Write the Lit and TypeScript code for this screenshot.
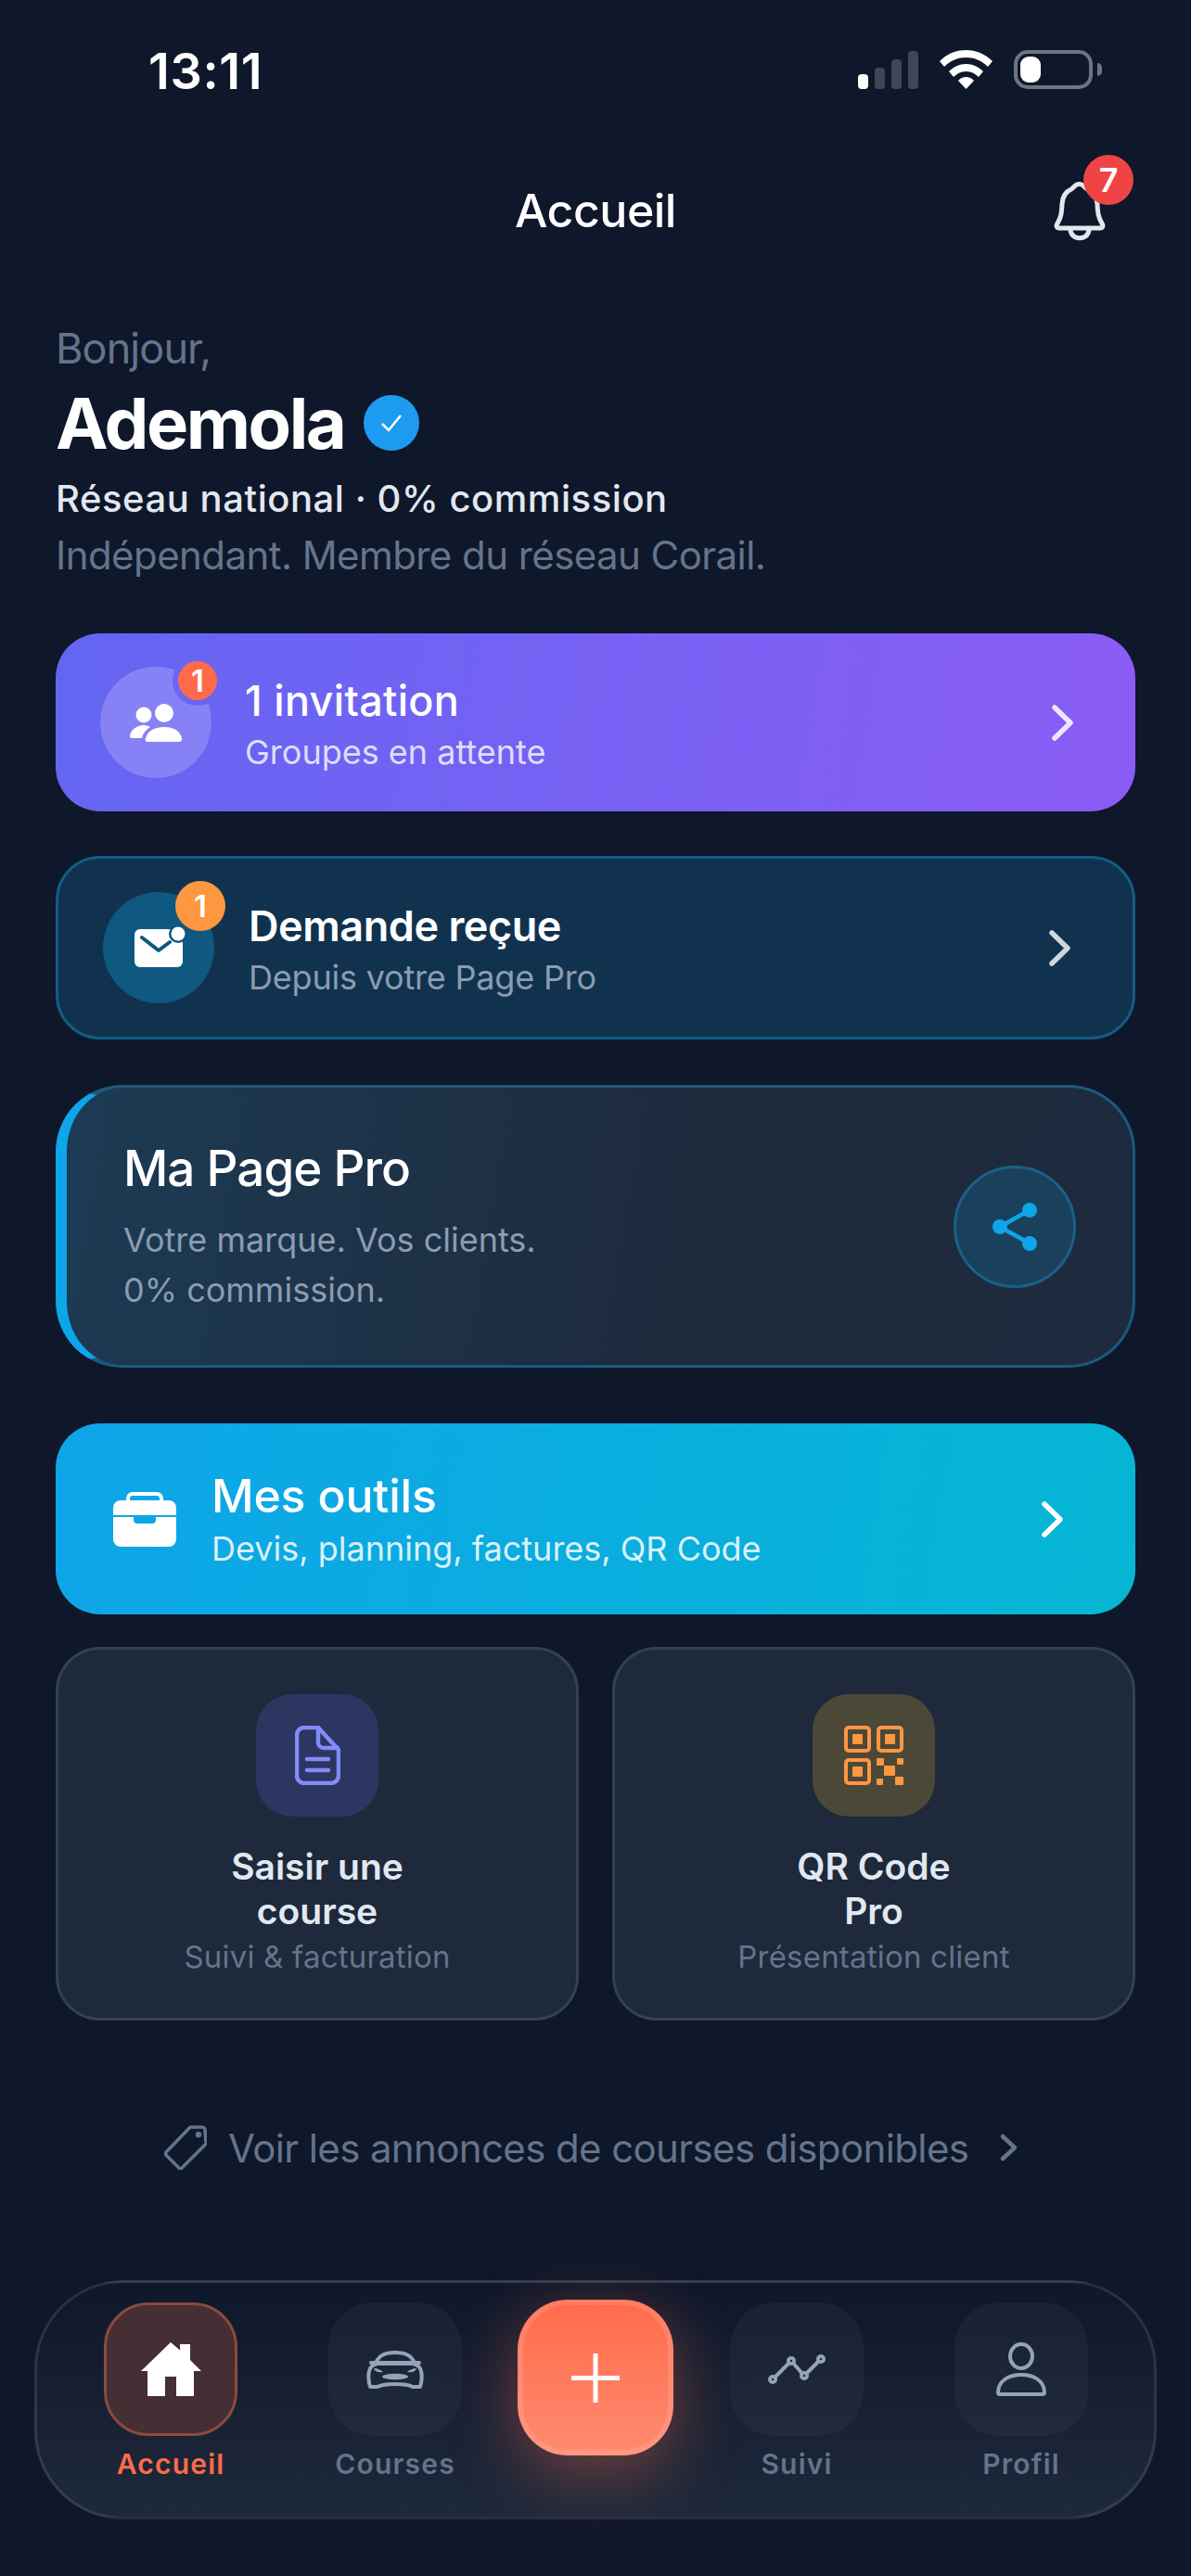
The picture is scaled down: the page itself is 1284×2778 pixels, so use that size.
import { LitElement, html, css, svg } from 'lit';
import { customElement } from 'lit/decorators.js';

const chevron = (stroke: string) => html`<svg class="chev" width="23" height="39" viewBox="0 0 23 39" fill="none">
  <path d="M3 3 L20 19.5 L3 36" stroke=${stroke} stroke-width="5.5" stroke-linecap="round" stroke-linejoin="round" />
</svg>`;

const navIcons = {
  home: svg`<path fill="#fff" d="M32 0 L42 8.5 V2 H53 V19 L65 31 H57 V58 H38 V37 H26 V58 H7 V31 H0 Z" />`,
  car: svg`<g fill="none" stroke="#94a3b8" stroke-width="4" stroke-linejoin="round">
    <path d="M10 13 C14 5 20 2 31 2 C42 2 48 5 52 13" />
    <path d="M5 13 H57" stroke-linecap="round" />
    <path d="M4 39 C2 32 2 26 3 22 C4 17 7 15 12 14 H50 C55 15 58 17 59 22 C60 26 60 32 58 39 H50 C44 36 38 36 31 36 C24 36 18 36 12 39 Z" />
  </g>
  <path fill="#94a3b8" d="M8 19 C12 19 16 21 18 23 C13 24 9 23 8 19Z M54 19 C50 19 46 21 44 23 C49 24 53 23 54 19Z" />
  <ellipse cx="31" cy="28" rx="14" ry="3.2" fill="#94a3b8" />`,
  chart: svg`<path d="M5 27 L25 7 L39 23 L57 5" fill="none" stroke="#94a3b8" stroke-width="4" stroke-linejoin="round" />
  <g fill="#94a3b8"><circle cx="5" cy="27" r="5" /><circle cx="25" cy="7" r="5" /><circle cx="39" cy="23" r="5" /><circle cx="57" cy="5" r="5" /></g>
  <g fill="#1a2436"><circle cx="5" cy="27" r="1.2" /><circle cx="25" cy="7" r="1.2" /><circle cx="39" cy="23" r="1.2" /><circle cx="57" cy="5" r="1.2" /></g>`,
  user: svg`<g fill="none" stroke="#94a3b8" stroke-width="4" stroke-linejoin="round">
    <ellipse cx="27" cy="15" rx="12" ry="13" />
    <path d="M2 54 C2 42 13 35 27 35 C41 35 52 42 52 54 C52 55.5 51 56 50 56 H4 C3 56 2 55.5 2 54Z" />
  </g>`,
};

const tabs = [
  { label: 'Accueil', icon: navIcons.home, w: 65, h: 58, active: true },
  { label: 'Courses', icon: navIcons.car, w: 62, h: 41, active: false },
  { label: 'Suivi', icon: navIcons.chart, w: 62, h: 33, active: false },
  { label: 'Profil', icon: navIcons.user, w: 54, h: 58, active: false },
];

@customElement('app-root')
export class AppRoot extends LitElement {
  static styles = css`
    :host {
      display: block;
      width: 1284px;
      height: 2778px;
      overflow: hidden;
      background: #0f172a;
      color: #fff;
      font-family: Inter, 'Liberation Sans', sans-serif;
    }

    /* status bar */
    .status {
      display: flex;
      align-items: center;
      justify-content: space-between;
      height: 42px;
      padding: 54px 97px 0 160px;
    }
    .time {
      font-size: 54px;
      font-weight: 600;
      line-height: 42px;
      letter-spacing: 0.6px;
      padding-top: 4px;
    }
    .status-icons {
      display: flex;
      align-items: flex-end;
    }
    .signal {
      display: flex;
      align-items: flex-end;
      gap: 7px;
      margin-right: 23px;
    }
    .signal i {
      display: block;
      width: 11px;
      border-radius: 4px;
      background: #3f4656;
    }
    .signal i.on {
      background: #fff;
    }
    .battery {
      position: relative;
      box-sizing: border-box;
      width: 85px;
      height: 42px;
      margin-left: 23px;
      margin-right: 9px;
      padding: 3px;
      border: 4px solid #6f7480;
      border-radius: 15px;
    }
    .battery b {
      display: block;
      width: 22px;
      height: 28px;
      border-radius: 9px;
      background: #fff;
    }
    .battery::after {
      content: '';
      position: absolute;
      right: -14px;
      top: 10px;
      width: 5px;
      height: 14px;
      border-radius: 0 6px 6px 0;
      background: #6f7480;
    }

    /* top bar */
    .topbar {
      display: grid;
      grid-template-columns: 1fr auto 1fr;
      align-items: center;
      height: 90px;
      margin-top: 86px;
    }
    .title {
      font-size: 50px;
      font-weight: 500;
      line-height: 90px;
      letter-spacing: -0.5px;
    }
    .bell {
      position: relative;
      justify-self: end;
      width: 54px;
      height: 62px;
      margin-right: 93px;
    }
    .bell svg {
      display: block;
      overflow: visible;
    }
    .bell-badge {
      position: absolute;
      left: 31px;
      top: -29px;
      width: 54px;
      height: 54px;
      border-radius: 50%;
      background: #ef4444;
      font-size: 36px;
      font-weight: 600;
      line-height: 54px;
      text-align: center;
    }

    /* greeting */
    .greet {
      padding: 0 60px;
      margin-top: 77px;
    }
    .hello {
      font-size: 45px;
      line-height: 54px;
      letter-spacing: -0.9px;
      color: #64748b;
    }
    .name-row {
      display: flex;
      align-items: center;
      gap: 21px;
      margin-top: 8px;
      height: 90px;
    }
    .name {
      font-size: 76px;
      font-weight: 700;
      line-height: 90px;
      letter-spacing: -2.5px;
    }
    .verified {
      display: block;
    }
    .network {
      font-size: 40px;
      font-weight: 500;
      line-height: 54px;
      color: #e2e8f0;
      margin-top: 10px;
      letter-spacing: 0.55px;
    }
    .role {
      font-size: 42px;
      line-height: 54px;
      letter-spacing: -0.57px;
      color: #64748b;
      margin-top: 7px;
    }

    /* action cards */
    .stack {
      display: flex;
      flex-direction: column;
      padding: 0 60px;
    }
    .row-card {
      box-sizing: border-box;
      display: flex;
      align-items: center;
      border-radius: 48px;
    }
    .row-text {
      flex: 1;
      min-width: 0;
      padding-top: 4px;
    }
    .row-title {
      font-size: 45px;
      font-weight: 500;
      line-height: 58px;
      letter-spacing: 0.3px;
    }
    .row-sub {
      font-size: 36px;
      line-height: 48px;
      margin-top: 2px;
    }
    .chev {
      display: block;
      flex: none;
    }
    .invite {
      height: 192px;
      margin-top: 57px;
      padding: 0 67px 0 48px;
      gap: 36px;
      background: linear-gradient(100deg, #6366f1, #8b5cf6);
    }
    .invite .row-sub {
      color: rgba(255, 255, 255, 0.78);
    }
    .request {
      height: 198px;
      margin-top: 48px;
      padding: 0 67px 0 48px;
      gap: 37px;
      background: #11324f;
      border: 3px solid #125d86;
    }
    .request .row-title {
      font-weight: 600;
      letter-spacing: -0.45px;
    }
    .request .row-sub {
      color: #8b9cb3;
      letter-spacing: -0.2px;
    }
    .avatar {
      position: relative;
      flex: none;
      display: flex;
      align-items: center;
      justify-content: center;
      width: 120px;
      height: 120px;
      border-radius: 50%;
    }
    .avatar svg {
      display: block;
      overflow: visible;
    }
    .invite .avatar {
      background: #8781f6;
    }
    .request .avatar {
      background: #0f587f;
    }
    .count {
      position: absolute;
      border-radius: 50%;
      font-size: 33px;
      font-weight: 600;
      text-align: center;
    }
    .invite .count {
      left: 84px;
      top: -6px;
      width: 42px;
      height: 42px;
      line-height: 42px;
      background: #ff6b4a;
      box-shadow: 0 0 0 6px #6a65f3;
    }
    .request .count {
      left: 78px;
      top: -12px;
      width: 54px;
      height: 54px;
      line-height: 54px;
      background: #ff9640;
    }

    /* page pro */
    .pro {
      box-sizing: border-box;
      display: flex;
      align-items: center;
      justify-content: space-between;
      height: 305px;
      margin-top: 49px;
      padding: 0 61px 0 61px;
      border: 3px solid #1b5a7e;
      border-left: 12px solid #0ea5e9;
      border-radius: 72px;
      background: linear-gradient(100deg, #1c3b54, #1e293b 62%, #1e2b3e);
    }
    .pro-title {
      font-size: 53px;
      font-weight: 500;
      line-height: 66px;
      letter-spacing: -1px;
    }
    .pro-sub {
      font-size: 36px;
      line-height: 54px;
      color: #8b9cb3;
      margin-top: 17px;
    }
    .share {
      box-sizing: border-box;
      display: flex;
      align-items: center;
      justify-content: center;
      width: 132px;
      height: 132px;
      border-radius: 50%;
      background: #1a405c;
      border: 3px solid #1b6088;
    }

    /* tools */
    .tools {
      height: 206px;
      margin-top: 60px;
      padding: 0 78px 0 62px;
      gap: 38px;
      background: linear-gradient(100deg, #0ea5e9, #06b6d4);
    }
    .tools .row-text {
      padding-top: 0;
    }
    .tools .row-title {
      font-size: 50px;
      line-height: 60px;
      letter-spacing: -0.2px;
    }
    .tools .row-sub {
      font-size: 36px;
      color: rgba(255, 255, 255, 0.85);
      margin-top: 3px;
    }
    .tools svg:first-child {
      flex: none;
      display: block;
    }

    .grid {
      display: grid;
      grid-template-columns: 1fr 1fr;
      gap: 36px;
      margin-top: 35px;
    }
    .tile {
      box-sizing: border-box;
      display: flex;
      flex-direction: column;
      align-items: center;
      height: 403px;
      padding-top: 48px;
      background: #1e293b;
      border: 3px solid #334155;
      border-radius: 48px;
      text-align: center;
    }
    .tile-icon {
      display: flex;
      align-items: center;
      justify-content: center;
      width: 132px;
      height: 132px;
      border-radius: 39px;
    }
    .tile-icon.doc {
      background: #2d3561;
    }
    .tile-icon.qr {
      background: #4b4838;
    }
    .tile-icon svg {
      display: block;
    }
    .tile-title {
      font-size: 39px;
      font-weight: 600;
      line-height: 48px;
      color: #e2e8f0;
      margin-top: 30px;
    }
    .tile-sub {
      font-size: 33px;
      line-height: 48px;
      letter-spacing: 0.2px;
      color: #64748b;
      margin-top: 1px;
    }

    /* link */
    .ads {
      display: flex;
      align-items: center;
      height: 48px;
      margin-top: 113px;
      padding-left: 177px;
      color: #64748b;
      font-size: 42px;
      letter-spacing: -0.62px;
    }
    .ads svg {
      display: block;
      flex: none;
    }
    .ads span {
      margin-left: 23px;
      margin-right: 33px;
    }

    /* bottom nav */
    .nav {
      box-sizing: border-box;
      display: flex;
      align-items: flex-start;
      height: 258px;
      margin: 119px 37px 0;
      padding: 21px 0 0 72px;
      border: 3px solid rgba(255, 255, 255, 0.1);
      border-radius: 96px;
      background: linear-gradient(180deg, #0f172a, #1e293b);
    }
    .tab {
      display: flex;
      flex-direction: column;
      align-items: center;
      width: 144px;
      flex: none;
    }
    .tab + .tab {
      margin-left: 98px;
    }
    .tab-icon {
      box-sizing: border-box;
      display: flex;
      align-items: center;
      justify-content: center;
      width: 144px;
      height: 144px;
      border-radius: 48px;
      background: rgba(255, 255, 255, 0.035);
    }
    .tab-icon svg {
      display: block;
    }
    .tab.active .tab-icon {
      background: #452e34;
      border: 3px solid #8c4a3e;
    }
    .tab-label {
      font-size: 30px;
      font-weight: 600;
      line-height: 40px;
      letter-spacing: 1.2px;
      color: #64748b;
      margin-top: 10px;
    }
    .tab.active .tab-label {
      color: #ff6b4a;
    }
    .fab {
      box-sizing: border-box;
      flex: none;
      display: flex;
      align-items: center;
      justify-content: center;
      width: 168px;
      height: 168px;
      margin: -3px 61px 0 60px;
      border-radius: 54px;
      border: 6px solid rgba(255, 255, 255, 0.12);
      background: linear-gradient(180deg, #ff6b4a, #ff8a70) border-box;
      box-shadow: 0 18px 72px rgba(255, 107, 74, 0.4);
    }
    .fab svg {
      display: block;
    }
  `;

  render() {
    const [home, courses, suivi, profil] = tabs;
    return html`
      <div class="status">
        <span class="time">13:11</span>
        <div class="status-icons">
          <div class="signal">
            <i class="on" style="height:16px"></i>
            <i style="height:23px"></i>
            <i style="height:32px"></i>
            <i style="height:41px"></i>
          </div>
          <svg width="57" height="42" viewBox="0 0 57 42" fill="#fff">
            <path d="M0 12 C8 4 18 0 28.5 0 C39 0 49 4 57 12 L52 18 C45 11 37 8 28.5 8 C20 8 12 11 5 18 Z" />
            <path d="M10 23 C15 18 21 15 28.5 15 C36 15 42 18 47 23 L42 29 C38 25 34 23 28.5 23 C23 23 19 25 15 29 Z" />
            <path d="M20 33 C23 30 25 29 28.5 29 C32 29 34 30 37 33 L28.5 42 Z" />
          </svg>
          <div class="battery"><b></b></div>
        </div>
      </div>

      <div class="topbar">
        <span></span>
        <div class="title">Accueil</div>
        <div class="bell">
          <svg width="54" height="62" viewBox="0 0 54 62" fill="none" stroke="#e2e8f0" stroke-width="5" stroke-linejoin="round">
            <path d="M26.5 2.5 C22 2.5 21 6 18 8 C11 11 8.5 17 8 24 C7.5 34 7 38 3 45 C1 48 2.5 50 5 50 H49 C51.5 50 53 48 51 45 C47 38 46.5 34 46 24 C45.5 17 43 11 35 8 C32 6 31 2.5 26.5 2.5Z" />
            <path d="M17 51 C17 64 37 64 37 51" />
          </svg>
          <div class="bell-badge">7</div>
        </div>
      </div>

      <div class="greet">
        <div class="hello">Bonjour,</div>
        <div class="name-row">
          <span class="name">Ademola</span>
          <svg class="verified" width="60" height="60" viewBox="0 0 60 60">
            <circle cx="30" cy="30" r="30" fill="#1d9bf0" />
            <path d="M20 31 L27 38 L40 22" fill="none" stroke="#fff" stroke-width="2.5" />
          </svg>
        </div>
        <div class="network">Réseau national · 0% commission</div>
        <div class="role">Indépendant. Membre du réseau Corail.</div>
      </div>

      <div class="stack">
        <div class="row-card invite">
          <div class="avatar">
            <svg width="56" height="41" viewBox="0 0 56 41" fill="#fff">
              <circle cx="15" cy="12" r="8.5" />
              <circle cx="37" cy="10" r="10" />
              <path d="M19 41 C17 41 16 39 17 37 C19 29 27 25 37 25 C47 25 54 29 56 37 C56.5 39 55 41 53 41 Z" />
              <path d="M2 37 C0 37 0 35 0 34 C2 27 8 23 15 23 C18 23 20 24 22 25 C17 28 14 32 13 37 Z" />
            </svg>
            <span class="count">1</span>
          </div>
          <div class="row-text">
            <div class="row-title">1 invitation</div>
            <div class="row-sub">Groupes en attente</div>
          </div>
          ${chevron('rgba(255,255,255,0.85)')}
        </div>

        <div class="row-card request">
          <div class="avatar">
            <svg width="52" height="41" viewBox="0 0 52 41">
              <rect width="52" height="41" rx="6" fill="#fff" />
              <path d="M8 9 L26 23 L38 14" fill="none" stroke="#0f587f" stroke-width="4" stroke-linecap="round" stroke-linejoin="round" />
              <circle cx="47" cy="5" r="10" fill="#0f587f" />
              <circle cx="47" cy="5" r="7.5" fill="#fff" />
            </svg>
            <span class="count">1</span>
          </div>
          <div class="row-text">
            <div class="row-title">Demande reçue</div>
            <div class="row-sub">Depuis votre Page Pro</div>
          </div>
          ${chevron('rgba(255,255,255,0.8)')}
        </div>

        <div class="pro">
          <div>
            <div class="pro-title">Ma Page Pro</div>
            <div class="pro-sub">Votre marque. Vos clients.<br />0% commission.</div>
          </div>
          <div class="share">
            <svg width="50" height="54" viewBox="0 0 50 54" fill="#0ea5e9">
              <path d="M9 27 L41 9 M9 27 L41 45" stroke="#0ea5e9" stroke-width="4.5" fill="none" />
              <circle cx="41" cy="9" r="8" />
              <circle cx="9" cy="27" r="8" />
              <circle cx="41" cy="45" r="8" />
            </svg>
          </div>
        </div>

        <div class="row-card tools">
          <svg width="68" height="59" viewBox="0 0 68 59" fill="#fff">
            <path d="M16 10 V7 a5 5 0 0 1 5-5 h26 a5 5 0 0 1 5 5 v3" fill="none" stroke="#fff" stroke-width="4" />
            <path d="M0 25 V17 a8 8 0 0 1 8-8 h52 a8 8 0 0 1 8 8 v8 Z" />
            <path d="M0 27 H22 v3 a4 4 0 0 0 4 4 h16 a4 4 0 0 0 4-4 v-3 H68 V51 a8 8 0 0 1-8 8 H8 a8 8 0 0 1-8-8Z" />
          </svg>
          <div class="row-text">
            <div class="row-title">Mes outils</div>
            <div class="row-sub">Devis, planning, factures, QR Code</div>
          </div>
          ${chevron('#fff')}
        </div>

        <div class="grid">
          <div class="tile">
            <div class="tile-icon doc">
              <svg width="49" height="64" viewBox="0 0 49 64" fill="none" stroke="#818cf8" stroke-width="4.5" stroke-linecap="round" stroke-linejoin="round">
                <path d="M10 2 H25 L47 26 V54 a8 8 0 0 1-8 8 H10 a8 8 0 0 1-8-8 V10 a8 8 0 0 1 8-8Z" />
                <path d="M25 3 V18 a6 6 0 0 0 6 6 H46" />
                <path d="M13 36 H36 M13 48 H36" />
              </svg>
            </div>
            <div class="tile-title">Saisir une<br />course</div>
            <div class="tile-sub">Suivi &amp; facturation</div>
          </div>
          <div class="tile">
            <div class="tile-icon qr">
              <svg width="64" height="64" viewBox="0 0 64 64" fill="#ff9640">
                <g fill="none" stroke="#ff9640" stroke-width="4">
                  <rect x="2" y="2" width="25" height="25" rx="3" />
                  <rect x="37" y="2" width="25" height="25" rx="3" />
                  <rect x="2" y="37" width="25" height="25" rx="3" />
                </g>
                <rect x="9" y="9" width="11" height="11" rx="1" />
                <rect x="44" y="9" width="11" height="11" rx="1" />
                <rect x="9" y="44" width="11" height="11" rx="1" />
                <rect x="35" y="35" width="8" height="8" rx="1" />
                <rect x="57" y="35" width="7" height="7" rx="1" />
                <rect x="43" y="43" width="12" height="11" rx="1" />
                <rect x="35" y="57" width="7" height="7" rx="1" />
                <rect x="55" y="55" width="9" height="9" rx="1" />
              </svg>
            </div>
            <div class="tile-title">QR Code<br />Pro</div>
            <div class="tile-sub">Présentation client</div>
          </div>
        </div>
      </div>

      <div class="ads">
        <svg width="46" height="48" viewBox="0 0 46 48" fill="none" stroke="#64748b" stroke-width="3.5" stroke-linejoin="round">
          <path d="M28 2 H41 a3 3 0 0 1 3 3 L45 20 L19 46 a2 2 0 0 1-3 0 L2 32 a2 2 0 0 1 0-3 Z" />
          <circle cx="37" cy="10" r="3.2" fill="#64748b" stroke="none" />
        </svg>
        <span>Voir les annonces de courses disponibles</span>
        <svg width="21" height="30" viewBox="0 0 21 30" fill="none" stroke="#64748b" stroke-width="4.5" stroke-linecap="round" stroke-linejoin="round">
          <path d="M4 3 L17 15 L4 27" />
        </svg>
      </div>

      <div class="nav">
        ${this.tab(home)} ${this.tab(courses)}
        <div class="fab">
          <svg width="52" height="53" viewBox="0 0 52 53">
            <path d="M26 0 V53 M0 26.5 H52" stroke="#fff" stroke-width="5" />
          </svg>
        </div>
        ${this.tab(suivi, true)} ${this.tab(profil)}
      </div>
    `;
  }

  private tab(t: (typeof tabs)[number], afterFab = false) {
    return html`
      <div class="tab ${t.active ? 'active' : ''}" style=${afterFab ? 'margin-left:0' : ''}>
        <div class="tab-icon">
          <svg width=${t.w} height=${t.h} viewBox="0 0 ${t.w} ${t.h}">${t.icon}</svg>
        </div>
        <div class="tab-label">${t.label}</div>
      </div>
    `;
  }
}

declare global {
  interface HTMLElementTagNameMap {
    'app-root': AppRoot;
  }
}
